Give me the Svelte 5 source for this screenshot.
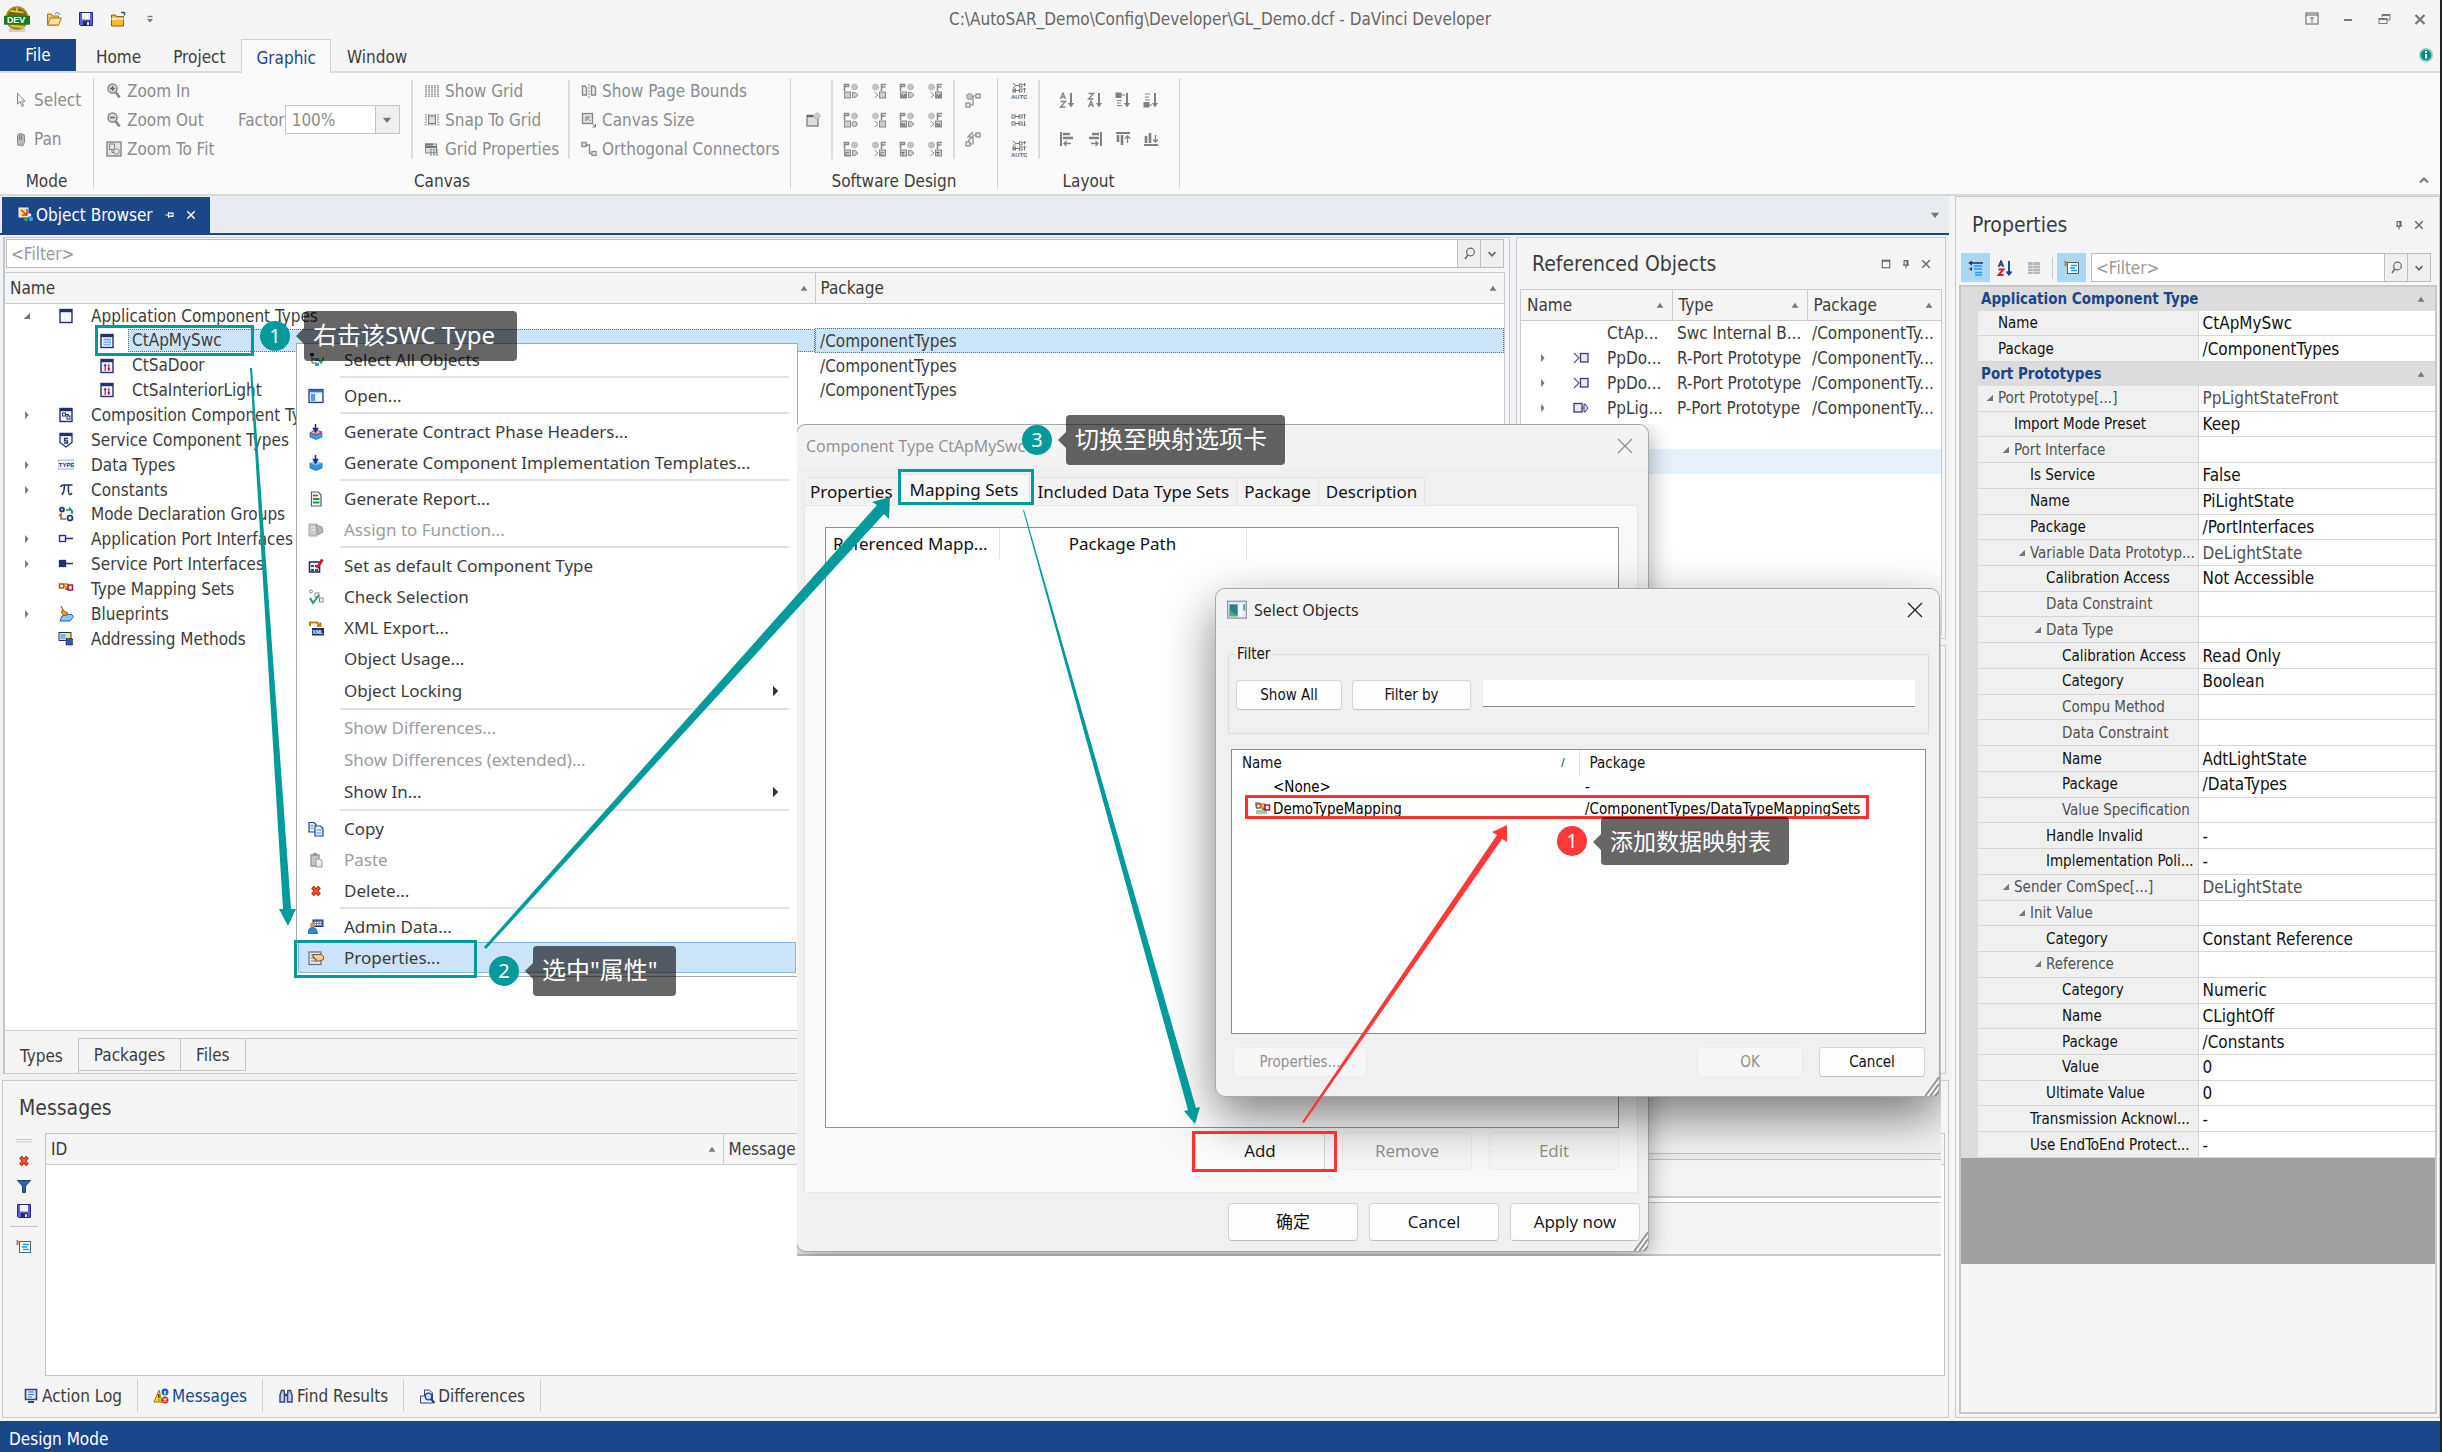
<script>
  const flagPort = (t, round) =>
    `<g stroke="#8a8a8a" fill="#cfcfcf"><path d="M1.500 8V1.500h4v2h-4" fill="none" stroke-width="1.600"/><rect x="1.500" y="9" width="6" height="6"/>${round ? '<circle cx="11.500" cy="12" r="2.600"/>' : '<path d="M9.500 9.500h2.500l3 2.500-3 2.500H9.500z"/>'}<circle cx="11.500" cy="4" r="3" fill="#c4c4c4" stroke="#a8a8a8" stroke-dasharray="1.500 1"/></g><text x="2" y="14.600" font-size="6" font-family="Liberation Sans" font-weight="700" fill="#666">${t}</text>`;
  const flagReq = (t, round) =>
    `<g stroke="#8a8a8a" fill="#cfcfcf"><path d="M10.500 8V1.500h4.500M10.500 4h4" fill="none" stroke-width="1.600"/><rect x="8.500" y="9" width="6" height="6"/><path d="${round ? 'M3.500 9.500q3 0 3 2.500t-3 2.500' : 'M3.500 9l3.500 3-3.500 3'}" fill="none"/><circle cx="4.500" cy="4" r="3" fill="#c4c4c4" stroke="#a8a8a8" stroke-dasharray="1.500 1"/></g><text x="9" y="14.600" font-size="6" font-family="Liberation Sans" font-weight="700" fill="#666">${t}</text>`;
  const auto = `<g stroke="#777" fill="none"><path d="M2 0l3 2.500L2 5M5 2.500h4M2 7.500h7M13.500 0v3.500M13.500 5v4.500M12 2l1.500-1.500 1.500 1.500M12 6.500l1.500-1.500 1.500 1.500"/><rect x="8.500" y="1" width="2.500" height="3"/><rect x="2" y="6" width="2.500" height="3"/><rect x="8.500" y="6" width="2.500" height="3"/></g><text x="0" y="15.500" font-size="6" font-family="Liberation Sans" font-weight="700" fill="#666">AUTO</text>`;
  const pageIn = `<rect x="3.500" y="2.500" width="11" height="11" fill="#fff" stroke="#4d5f77"/><path d="M7 5.500h6M6 8h5M7 10.500h6" stroke="#1f9bff" stroke-width="1.300"/><path d="M1 1l3 2.500L1 6z" fill="#e8a33b" stroke="#6b4a18" stroke-width=".6"/>`;
  const floppy = `<path d="M1.500 1.500h13v13h-12l-1-1z" fill="#5a60dc" stroke="#22268a"/><rect x="4" y="2" width="8" height="6.500" fill="#f2f4ff"/><rect x="5" y="10" width="7" height="4.500" fill="#2a2a55"/><rect x="9" y="11" width="2" height="3" fill="#dde"/>`;
  const win = (inner) => `<rect x="2" y="1.500" width="12" height="13" fill="#f4f8ff" stroke="#25306b" stroke-width="1.400"/><path d="M2 3h12" stroke="#25306b" stroke-width="2.400"/>${inner}`;
  const redX = `<path d="M4.500 4l7 8M11.500 4l-7 8" stroke="#8e1b06" stroke-width="3.600"/><path d="M4.800 4.400l6.400 7.200M11.200 4.400l-6.400 7.200" stroke="#ff5a2a" stroke-width="2"/>`;
  const mapping = `<g fill="#fff" stroke-width="1.500"><path d="M1.500 3h4v4h-4z" stroke="#a05a20"/><path d="M6.500 3h3v3h-3z" stroke="#d08a1a"/><path d="M10 4h4.500v5H10z" stroke="#b4123a"/><path d="M7 8h4" stroke="#b4123a"/></g>`;

  const icons = {
    app: `<path d="M3 13.500h10V16H3z" fill="#cfcfcf"/><ellipse cx="8" cy="7.500" rx="7" ry="7.300" fill="#a78a12"/><ellipse cx="8" cy="6" rx="5.500" ry="4.500" fill="#6f6a12"/><path d="M4 3l8 1M4 12l8 1M8 1v3" stroke="#e6cf53"/><rect x="0" y="6" width="16" height="5.500" fill="#157a25"/><text x="1.800" y="10.700" font-size="5.500" font-family="Liberation Sans" font-weight="700" fill="#fff">DEV</text>`,
    open: `<path d="M1.500 14V3h4l1 2h6v9z" fill="#f0c562" stroke="#a5761a"/><path d="M1.500 14l3-7h11l-3 7z" fill="#ffe39a" stroke="#a5761a"/><path d="M9 3q3-3 5 1" stroke="#4b6ca8" fill="none"/>`,
    save: floppy,
    folderUp: `<path d="M1.500 15V4h4l1 1.500h7V15z" fill="#f7b733" stroke="#8e5f0e"/><path d="M1.500 8h12" stroke="#fff0b8" stroke-width="2"/><path d="M11 1.500h3.500v3" stroke="#37558f" stroke-width="1.500" fill="none"/>`,
    more: `<path d="M5.500 5.500h5" stroke="#777" stroke-width="1.400"/><path d="M5 8h6L8 11.500z" fill="#777"/>`,
    pinTop: `<g stroke="#777" fill="none"><rect x="2" y="2" width="12" height="11" stroke-width="1.200"/><path d="M2 4h12" stroke-width="1.200"/><path d="M8 12V6M6 8l2-2 2 2"/></g>`,
    min: `<path d="M4 9h8" stroke="#777" stroke-width="2"/>`,
    restore: `<g stroke="#777" fill="none"><path d="M6 6V3.500h8V9h-2.500"/><path d="M6 4h8" stroke-width="2"/><rect x="3" y="7.500" width="8" height="5"/><path d="M3 8h8" stroke-width="2"/></g>`,
    closeBig: `<path d="M3.500 4l9 9M12.500 4l-9 9" stroke="#777" stroke-width="2.200"/>`,
    info: `<circle cx="8" cy="8" r="7" fill="#8fcfc8"/><circle cx="8" cy="8" r="5.300" fill="#0e8d86"/><path d="M8 7v4.500M8 4v1.800" stroke="#fff" stroke-width="2"/>`,
    chevUp: `<path d="M4 10.500l4-4 4 4" stroke="#777" stroke-width="2" fill="none"/>`,
    cursor: `<path d="M4.500 1v11l2.600-2.200L9 14.500l1.800-.8-2-4.500H12z" fill="#f4f4f4" stroke="#888"/>`,
    hand: `<path d="M4.500 14V5q0-1.500 1.200-1.500V3q1-2 2 0 1-1.500 2 .5 1.800-.5 1.800 1.500v6l-1.500 3.500z" fill="#bbb" stroke="#888"/><path d="M6.500 4v5M8.500 4v5" stroke="#777"/>`,
    zoomIn: `<circle cx="6.500" cy="5.500" r="4.500" fill="#ddd" stroke="#888" stroke-width="1.500"/><path d="M4 5.500h5M6.500 3v5" stroke="#666" stroke-width="1.500"/><path d="M9.500 9l4 5.500" stroke="#888" stroke-width="2.600"/>`,
    zoomOut: `<circle cx="6.500" cy="5.500" r="4.500" fill="#ddd" stroke="#888" stroke-width="1.500"/><path d="M4 5.500h5" stroke="#666" stroke-width="1.500"/><path d="M9.500 9l4 5.500" stroke="#888" stroke-width="2.600"/>`,
    fit: `<g fill="#e4e4e4" stroke="#888"><rect x="1" y="1" width="14" height="14" stroke-width="1.400"/><rect x="3.500" y="3" width="5" height="5.500"/><circle cx="10.500" cy="10.500" r="2.800"/><path d="M6 8.500v3h2" fill="none"/></g>`,
    grid: `<path d="M2 2v12M5 2v12M8 2v12M11 2v12M14 2v12" stroke="#a4a4a4" stroke-width="2" stroke-dasharray="1.500 .6"/>`,
    snap: `<path d="M2 2v12M14 2v12M5 2v12M11 2v12M8 2v12" stroke="#999" stroke-width="1.500" stroke-dasharray="1.500 1"/><rect x="4.500" y="4" width="7" height="7.500" fill="#ddd" stroke="#777"/>`,
    gridProps: `<rect x="1.500" y="3" width="11" height="9" fill="#ddd" stroke="#888"/><path d="M1 3.500h8M1 6h12" stroke="#777" stroke-width="2"/><path d="M7 8v7M10 8v7M13 8v7" stroke="#777" stroke-width="1.500" stroke-dasharray="1.500 1"/>`,
    bounds: `<g fill="#eee" stroke="#888"><path d="M1.500 3h2.500l1.500 2v7h-4zM10.500 3h2.500l1.500 2v7h-4z" stroke-width="1.400"/><path d="M8 1v14" stroke-dasharray="2 1"/></g>`,
    canvas: `<rect x="1.500" y="1.500" width="10" height="10" fill="#ddd" stroke="#888" stroke-width="1.300"/><path d="M5 9V5h4M6 6l3 3" stroke="#777" fill="none"/><path d="M11 11l3.500 4M14.500 12v3h-3" stroke="#777" fill="none"/>`,
    ortho: `<g fill="#eee" stroke="#888" stroke-width="1.300"><rect x="1" y="1.500" width="4" height="4"/><rect x="11" y="10.500" width="4" height="4"/><path d="M5 4h3.500v8.500H11" fill="none"/></g>`,
    newComp: `<path d="M2 4h11v10H2z" fill="#ddd" stroke="#888" stroke-width="1.400"/><path d="M2 4h6" stroke="#666" stroke-width="2.500"/><circle cx="12" cy="4" r="3" fill="#ccc" stroke="#aaa" stroke-dasharray="1.500 1"/>`,
    p1: flagPort('', false), r1: flagReq('', false), p2: flagPort('M', false), r2: flagReq('M', false),
    p3: flagPort('', true), r3: flagReq('', true), p4: flagPort('N', false), r4: flagReq('N', false),
    p5: flagPort('C', false), r5: flagReq('C', false), p6: flagPort('T', false), r6: flagReq('T', false),
    conn: `<g fill="#eee" stroke="#888" stroke-width="1.200"><circle cx="4.500" cy="4.500" r="3" fill="#c4c4c4" stroke-dasharray="1.500 1"/><rect x="11" y="2" width="4" height="4"/><rect x="1" y="11" width="4" height="4"/><path d="M11 4H8v9H5" fill="none"/></g>`,
    connFast: `<g fill="#eee" stroke="#888" stroke-width="1.200"><rect x="11" y="2" width="4" height="4"/><rect x="1" y="11" width="4" height="4"/><path d="M11 4H8v9H5M8 1L3 6h4L3 10" fill="none"/></g>`,
    auto,
    align2: `<g fill="none" stroke="#777"><path d="M4 4.500h5M4 11.500h5M13.500 2v5M12 3.500l1.500-1.500 1.500 1.500M13.500 9v5M12 12.500l1.500 1.500 1.500-1.500"/><rect x="1" y="3" width="3" height="3"/><rect x="8" y="3" width="3" height="3"/><rect x="1" y="10" width="3" height="3"/><rect x="8" y="10" width="3" height="3"/></g>`,
    sortAZ: `<g fill="none" stroke="#808080" stroke-width="1.300"><path d="M1.500 7L4 1l2.500 6M2.500 5h3M1.500 9.500h5l-5 5.500h5"/><path d="M12 1v12" stroke-width="2"/></g><path d="M9 11h6l-3 4.500z" fill="#808080"/>`,
    sortZA: `<g fill="none" stroke="#808080" stroke-width="1.300"><path d="M1.500 1.500h5l-5 5.500h5M1.500 15L4 9l2.500 6M2.500 13h3"/><path d="M12 1v12" stroke-width="2"/></g><path d="M9 11h6l-3 4.500z" fill="#808080"/>`,
    sortTop: `<g stroke="#808080" fill="#808080"><rect x="1" y="1" width="5" height="4.500"/><path d="M6 3h4M2 8.500h5M2 11h4M2 13.500h5" stroke-width="1.200"/><path d="M12 1v12" stroke-width="2"/></g><path d="M9 11h6l-3 4.500z" fill="#808080"/>`,
    sortBottom: `<g stroke="#808080" fill="#808080"><rect x="1" y="10.500" width="5" height="4.500"/><path d="M6 13h3M2 2h5M2 5h4M2 8h5" stroke-width="1.200"/><path d="M12 1v12" stroke-width="2"/></g><path d="M9 11h6l-3 4.500z" fill="#808080"/>`,
    alLeft: `<g stroke="#808080" fill="none"><path d="M2 1v14" stroke-width="2"/><path d="M4 3h7M4 7h10" stroke-width="2.600"/><path d="M5 12.500h7M7.500 10L5 12.500 7.500 15" stroke-width="1.300"/></g>`,
    alRight: `<g stroke="#808080" fill="none"><path d="M14 1v14" stroke-width="2"/><path d="M5 3h7M2 7h10" stroke-width="2.600"/><path d="M4 12.500h7M8.500 10l2.500 2.500L8.500 15" stroke-width="1.300"/></g>`,
    alTop: `<g stroke="#808080" fill="none"><path d="M1 2h14" stroke-width="2"/><path d="M3 4v7M7 4v10" stroke-width="2.600"/><path d="M12.500 12V5M10 7.500L12.500 5 15 7.500" stroke-width="1.300"/></g>`,
    alBottom: `<g stroke="#808080" fill="none"><path d="M1 14h14" stroke-width="2"/><path d="M3 5v7M7 2v10" stroke-width="2.600"/><path d="M12.500 4v7M10 8.500l2.500 2.500L15 8.500" stroke-width="1.300"/></g>`,
    objBrowser: `<rect x="1" y="1" width="9" height="9" fill="#ffe27a" stroke="#e9edf8"/><path d="M3 3l6 5M9 2v6H4" stroke="#d33a1f" stroke-width="1.500" fill="none"/><circle cx="13" cy="12" r="2.200" fill="#2aa7e8"/><circle cx="8" cy="12.500" r="2" fill="#27a343"/><circle cx="11.500" cy="8" r="1.800" fill="#f5f5f5"/>`,
    pinSide: `<path d="M2 8h4M6 4v8M6 5.500h6v4.500H6M6 9.500h6" stroke="currentColor" stroke-width="1.500" fill="none"/>`,
    pin: `<path d="M4 9.500h8M5.500 9.500v-6h5v6M9.300 3.500v6M8 9.500V14" stroke="currentColor" stroke-width="1.500" fill="none"/>`,
    x: `<path d="M3 3l10 10M13 3L3 13" stroke="currentColor" stroke-width="1.900"/>`,
    square: `<rect x="3" y="3" width="10" height="10" fill="none" stroke="#666" stroke-width="1.500"/><path d="M3 4h10" stroke="#666" stroke-width="2"/>`,
    search: `<circle cx="9.500" cy="6" r="3.800" fill="none" stroke="#666" stroke-width="1.200"/><path d="M6.800 9L4 13" stroke="#666" stroke-width="1.500"/>`,
    chevDown: `<path d="M3.500 5.500l4.500 5 4.500-5" stroke="#666" stroke-width="2.200" fill="none"/>`,
    triDown: `<path d="M2.500 5h11L8 12z" fill="#777"/>`,
    triUp: `<path d="M3.500 11.500h9L8 5z" fill="#777"/>`,
    sub: `<path d="M4 1l7 7-7 7z" fill="#333"/>`,
    closed: `<path d="M5.500 2.500L10 8l-4.500 5.500z" fill="#777"/>`,
    opened: `<path d="M12 3.500V12H3.500z" fill="#777"/>`,
    ctApp: win(''),
    ctMy: win('<rect x="4.500" y="5.500" width="7.500" height="7" fill="#7db4f0"/><path d="M5 8h6M5 10.500h6" stroke="#fff" stroke-width=".7"/>'),
    ctSa: win('<path d="M6.200 7v6M9.800 6v6.500" stroke="#c2183c" stroke-width="1.300"/><path d="M4.500 8h3.400L6.200 5.500zM8 10.500h3.500l-1.700 2.500z" fill="#7b1fa2"/>'),
    ctComp: win('<rect x="4.500" y="6" width="3" height="3" fill="#fff" stroke="#25306b"/><rect x="9" y="9" width="3" height="3" fill="#fff" stroke="#25306b"/><path d="M7.500 7.500h3V9" stroke="#25306b" fill="none"/>'),
    ctSvc: `<path d="M2 1.500h12v9L8 15l-6-4.500z" fill="#f4f8ff" stroke="#25306b" stroke-width="1.300"/><path d="M2 3h12" stroke="#25306b" stroke-width="2.200"/><path d="M10 6.500H6.500v2.300h3V11H6" fill="none" stroke="#25306b" stroke-width="1.300"/>`,
    types: `<rect x="0" y="3" width="16" height="9" fill="#eef3ff" stroke="#8fa3d8" stroke-width=".8"/><text x=".8" y="10.300" font-size="6" font-family="Liberation Sans" font-weight="700" fill="#25306b">TYPE</text>`,
    pi: `<path d="M2.500 5q1-2 3-2h9M6.500 3.500q0 6-2.500 9.500M10.500 3.500q-.5 9 1 9t2.500-1.500" fill="none" stroke="#25306b" stroke-width="1.500"/>`,
    mode: `<g fill="none" stroke-width="1.700"><circle cx="4" cy="3.500" r="2" fill="#9fd0e8" stroke="#25306b"/><path d="M8 4h5l-2-2.500M14 4v4" stroke="#1c8a5c"/><circle cx="12" cy="12" r="2.500" fill="#dfe7ff" stroke="#25306b"/><path d="M8 13H3V8l-2 2" stroke="#b56a16"/></g>`,
    portApp: `<rect x="1.500" y="4.500" width="6" height="6" fill="#eef" stroke="#25306b" stroke-width="1.300"/><path d="M8 7.500h7" stroke="#25306b" stroke-width="1.500"/>`,
    portSvc: `<rect x="1.500" y="4.500" width="6" height="6" fill="#25306b" stroke="#25306b" stroke-width="1.300"/><path d="M8 7.500h7" stroke="#25306b" stroke-width="1.500"/>`,
    mapping,
    mapping2: `<rect x="1" y="9" width="11" height="4" fill="#8fd0b0"/><rect x="0" y="1" width="5" height="5" fill="#7db4f0"/>` + mapping,
    blue: `<path d="M4 10l9-2 2.500 2.500L12 15H2z" fill="#8ec5f5" stroke="#1f5fa8"/><path d="M3 0l2 4-2 2 3 4 4-3-4-2z" fill="#e89b1e" stroke="#8a5508" stroke-width=".8"/>`,
    addr: `<rect x="1" y="1.500" width="12" height="8" fill="#ffe27a" stroke="#25306b"/><rect x="2.500" y="3" width="5" height="5" fill="#7db4f0"/><rect x="8" y="7.500" width="6.500" height="6.500" fill="#3b55a8" stroke="#25306b" stroke-dasharray="1.500 .8"/>`,
    reqPort: `<path d="M1 3l5 5-5 5" fill="none" stroke="#5a5a80" stroke-width="1.200"/><rect x="7.500" y="3.500" width="7.500" height="8.500" fill="#e8e8f4" stroke="#3c3c66" stroke-width="1.300"/>`,
    provPort: `<rect x="1" y="3.500" width="8" height="8.500" fill="#e8e8f4" stroke="#3c3c66" stroke-width="1.300"/><path d="M9 8h2M11 4h1l3 4-3 4h-1z" fill="#dcdcf0" stroke="#3c3c66"/>`,
    selAll: `<path d="M2 1h4v3H2z" fill="#333"/><path d="M4 4v7h5M4 7h5" stroke="#555" fill="none"/><rect x="7" y="6" width="4" height="3" fill="#2a9df4"/><rect x="7" y="11" width="4" height="3" fill="#2a9df4"/><path d="M11 8l2 3 3-6" stroke="#2a9d3c" stroke-width="1.600" fill="none"/>`,
    openWin: `<rect x="1" y="1.500" width="14" height="13" fill="#d6e8ff" stroke="#25408b" stroke-width="1.300"/><path d="M1 3h14" stroke="#2f6fd0" stroke-width="2.500"/><rect x="3" y="6" width="4" height="7" fill="#4d9cf5"/><rect x="8.500" y="6" width="5" height="7" fill="#fff"/>`,
    genH: `<path d="M2 9l6 2 6-2v4l-6 2.500L2 13z" fill="#3aa0f0" stroke="#135a9c" stroke-width=".7"/><path d="M2 9l5-3 7 2-6 2.500z" fill="#f3c0c0" stroke="#c22" stroke-width=".9"/><path d="M7.500 0v6M5.500 4.500L7.500 8l2-3.500z" stroke="#1b2f78" stroke-width="1.500" fill="#1b2f78"/>`,
    genC: `<path d="M2 8l6 2 6-2v5l-6 2.500L2 13z" fill="#2f95ea" stroke="#135a9c" stroke-width=".7"/><path d="M2 8l5-2.500L14 8l-6 2.500z" fill="#7cc6f8"/><path d="M7.500 0v6M5.500 4.500L7.500 8l2-3.500z" stroke="#1b2f78" stroke-width="1.500" fill="#1b2f78"/>`,
    report: `<path d="M3.500 1h7l2.500 3v11h-9.500z" fill="#fff" stroke="#4d5f77" stroke-width="1.200"/><path d="M5 4.500h5" stroke="#c33" stroke-width="1.800"/><path d="M5 8h6.500M5 11.500h6.500" stroke="#1f9a3c" stroke-width="2.200"/>`,
    assign: `<path d="M1 2h8v12H1z" fill="#c9c9c9" stroke="#a5a5a5"/><path d="M8 3l6 2 1 5-5 3z" fill="#b5b5b5" stroke="#999"/><path d="M3 5h4M3 8h4" stroke="#eee"/>`,
    setDef: `<rect x="1.500" y="4" width="10" height="10" fill="#fff" stroke="#25306b" stroke-width="1.600"/><path d="M3 7h3v2H3zM7 7h3v2H7zM3 11h3v2H3zM7 11h3v2H7z" fill="#4d3a7a"/><path d="M9 10L14.500 1.500" stroke="#d21f2f" stroke-width="3"/>`,
    check: `<g fill="#fff" stroke="#888"><circle cx="3" cy="2.500" r="1.500"/><rect x="7" y="4" width="4" height="4"/><rect x="11.500" y="9" width="3.500" height="4"/></g><path d="M2 9l3 5 6-8" stroke="#1f9a6c" stroke-width="2" fill="none"/>`,
    xml: `<path d="M2 6V2.500h7l3 3.500M9 6h3.500V2.500" stroke="#c77a12" stroke-width="2" fill="none"/><rect x="4" y="8" width="12" height="7.500" fill="#25306b"/><text x="4.600" y="14" font-size="5" font-family="Liberation Sans" font-weight="700" fill="#fff">XML</text>`,
    copy: `<g fill="#eaf2ff" stroke="#25408b" stroke-width="1.200"><path d="M1 1.500h5l2 2V11H1z"/><path d="M7 5h5.500L15 7.500V15H7z"/></g><path d="M2.500 4.500h3M2.500 7h3M8.500 9h5M8.500 12h5" stroke="#2f8ff0"/>`,
    paste: `<path d="M3 3h8v11H3z" fill="#c4c4c4" stroke="#999" stroke-width="1.400"/><rect x="5" y="1" width="4" height="3" fill="#999"/><path d="M8 7h4l2 2v6H8z" fill="#eee" stroke="#999"/>`,
    redX,
    admin: `<rect x="5" y="1" width="10" height="6.500" fill="#6a7fc0" stroke="#25306b"/><path d="M6.500 3.500h7M6.500 5.500h7" stroke="#fff" stroke-dasharray="1.500 1"/><circle cx="4.500" cy="6" r="2.500" fill="#d49a4a"/><path d="M0 14.500q0-6 4.500-6t5 6z" fill="#2a8be0" stroke="#135a9c" stroke-width=".8"/>`,
    props: `<rect x="1" y="2" width="12" height="12.500" fill="#e8ecf2" stroke="#66707f" stroke-width="1.200"/><path d="M3 5h3M3 8h3M3 11h6" stroke="#66707f"/><path d="M5 4.500h8.500l2 2v3L12 11H8V9H6V7H5z" fill="#f0c98c" stroke="#6d4a1b" stroke-width=".9"/>`,
    filter: `<path d="M1.500 2.500h13l-5 5.500v6.500h-3V8z" fill="#2f62a8" stroke="#1b3d78"/>`,
    pageIn,
    catSort: `<g stroke="#1f9bff"><path d="M6 6h8M6 9h8M7 12.500h7M7 15h7" stroke-width="1.600"/></g><path d="M3 3h12" stroke="#1b3d78" stroke-width="1.600"/><path d="M0 3l4-2.500v5zM1 9l3-2v4z" fill="#1b3d78"/>`,
    azColor: `<path d="M1.500 7L4 1l2.500 6M2.500 5h3" fill="none" stroke="#1b3d78" stroke-width="1.600"/><path d="M1.500 9.500h5l-5 5.500h5" fill="none" stroke="#d21f3f" stroke-width="1.900"/><path d="M12 1v12M9.500 11.500l2.500 3 2.500-3" stroke="#1b3d9c" stroke-width="1.900" fill="none"/>`,
    list: `<rect x="2" y="2" width="12" height="12" fill="#b8b8b8"/><path d="M7 2v12M2 5.500h12M2 8.500h12M2 11.500h12" stroke="#dcdcdc"/>`,
    selObj: `<rect x=".5" y="1" width="15" height="13.500" fill="#e6ecf4" stroke="#8a97a8"/><rect x="2" y="3.500" width="6.500" height="9.500" fill="#2d7d8a"/><path d="M2 13V8l6.500 5z" fill="#4fb06a"/><rect x="10" y="3.500" width="2" height="9.500" fill="#fff"/><rect x="13" y="3.500" width="1.500" height="5" fill="#4fa3a0"/>`,
    actionLog: `<path d="M2.500 1.500h11v10h-11z" fill="#d6ecff" stroke="#3a3f6b" stroke-width="1.600"/><path d="M5 4h6M5 6.500h6M5 9h4" stroke="#3a6fc0"/><path d="M5 14h6" stroke="#3a3f6b" stroke-width="2"/>`,
    msgs: `<path d="M1 14L6 2l3 12z" fill="#ffd92a" stroke="#9a7d00"/><path d="M5.800 6v4M5.800 11.500v1" stroke="#333" stroke-width="1.400"/><circle cx="12" cy="4" r="3.500" fill="#1f5fc8"/><path d="M12 3v3.500" stroke="#fff" stroke-width="1.400"/><circle cx="12" cy="12" r="3.500" fill="#d62f1f"/><path d="M10.500 10.500l3 3M13.500 10.500l-3 3" stroke="#fff" stroke-width="1.200"/>`,
    find: `<g fill="#c8d4ec" stroke="#3a4578" stroke-width="1.500"><path d="M2 14V7l1.500-4.500h2.500l.5 4.500v7zM9.500 14V7l.5-4.500h2.500L14 7v7z"/><path d="M6.500 7h3" stroke-width="2.500"/></g>`,
    diff: `<path d="M1.500 15V8h4V2h5l3 3v10z" fill="#e8f0ff" stroke="#3a4578"/><circle cx="9.500" cy="8.500" r="3.300" fill="#bfe0ff" stroke="#25408b" stroke-width="1.300"/><path d="M12 11l3.500 4" stroke="#25408b" stroke-width="2"/>`,
    closeThin: `<path d="M1 1l14 14M15 1L1 15" stroke="currentColor" stroke-width="1.300"/>`,
    grip: `<path d="M5 16L16 1M9 16l7-9.500M13 16l3-4" stroke="#8f8f8f" stroke-width="1.400"/>`,
    gripper: `<path d="M0 6.500h16M0 9h16" stroke="#c6c6c6" stroke-width="1.200"/>`
  };

  const swIcons = ['p1', 'r1', 'p2', 'r2', 'p3', 'r3', 'p4', 'r4', 'p5', 'r5', 'p6', 'r6'];
  const layIcons = ['sortAZ', 'sortZA', 'sortTop', 'sortBottom', 'alLeft', 'alRight', 'alTop', 'alBottom'];

  const tree = [
    { t: 'Application Component Types', i: 'ctApp', e: 'opened' },
    { t: 'CtApMySwc', i: 'ctMy', l: 1, sel: true, p: '/ComponentTypes' },
    { t: 'CtSaDoor', i: 'ctSa', l: 1, p: '/ComponentTypes' },
    { t: 'CtSaInteriorLight', i: 'ctSa', l: 1, p: '/ComponentTypes' },
    { t: 'Composition Component Types', i: 'ctComp', e: 'closed' },
    { t: 'Service Component Types', i: 'ctSvc' },
    { t: 'Data Types', i: 'types', e: 'closed' },
    { t: 'Constants', i: 'pi', e: 'closed' },
    { t: 'Mode Declaration Groups', i: 'mode' },
    { t: 'Application Port Interfaces', i: 'portApp', e: 'closed' },
    { t: 'Service Port Interfaces', i: 'portSvc', e: 'closed' },
    { t: 'Type Mapping Sets', i: 'mapping' },
    { t: 'Blueprints', i: 'blue', e: 'closed' },
    { t: 'Addressing Methods', i: 'addr' }
  ];

  const refs = [
    ['', '', 'CtAp...', 'Swc Internal B...', '/ComponentTy...'],
    ['closed', 'reqPort', 'PpDo...', 'R-Port Prototype', '/ComponentTy...'],
    ['closed', 'reqPort', 'PpDo...', 'R-Port Prototype', '/ComponentTy...'],
    ['closed', 'provPort', 'PpLig...', 'P-Port Prototype', '/ComponentTy...']
  ];

  const menu = [
    { t: 'Select All Objects', i: 'selAll' }, null,
    { t: 'Open...', i: 'openWin' }, null,
    { t: 'Generate Contract Phase Headers...', i: 'genH' },
    { t: 'Generate Component Implementation Templates...', i: 'genC' }, null,
    { t: 'Generate Report...', i: 'report' },
    { t: 'Assign to Function...', i: 'assign', d: true }, null,
    { t: 'Set as default Component Type', i: 'setDef' },
    { t: 'Check Selection', i: 'check' },
    { t: 'XML Export...', i: 'xml' },
    { t: 'Object Usage...' },
    { t: 'Object Locking', sub: true }, null,
    { t: 'Show Differences...', d: true },
    { t: 'Show Differences (extended)...', d: true },
    { t: 'Show In...', sub: true }, null,
    { t: 'Copy', i: 'copy' },
    { t: 'Paste', i: 'paste', d: true },
    { t: 'Delete...', i: 'redX' }, null,
    { t: 'Admin Data...', i: 'admin' },
    { t: 'Properties...', i: 'props', sel: true }
  ];

  // [label, value, level, expandable, greyed label, greyed value]
  const general = [['Name', 'CtApMySwc', 0], ['Package', '/ComponentTypes', 0]];
  const ports = [
    ['Port Prototype[...]', 'PpLightStateFront', 0, 1, 1, 1],
    ['Import Mode Preset', 'Keep', 1],
    ['Port Interface', '', 1, 1, 1],
    ['Is Service', 'False', 2],
    ['Name', 'PiLightState', 2],
    ['Package', '/PortInterfaces', 2],
    ['Variable Data Prototyp...', 'DeLightState', 2, 1, 1, 1],
    ['Calibration Access', 'Not Accessible', 3],
    ['Data Constraint', '', 3, 0, 1],
    ['Data Type', '', 3, 1, 1],
    ['Calibration Access', 'Read Only', 4],
    ['Category', 'Boolean', 4],
    ['Compu Method', '', 4, 0, 1],
    ['Data Constraint', '', 4, 0, 1],
    ['Name', 'AdtLightState', 4],
    ['Package', '/DataTypes', 4],
    ['Value Specification', '', 4, 0, 1],
    ['Handle Invalid', '-', 3],
    ['Implementation Poli...', '-', 3],
    ['Sender ComSpec[...]', 'DeLightState', 1, 1, 1, 1],
    ['Init Value', '', 2, 1, 1],
    ['Category', 'Constant Reference', 3],
    ['Reference', '', 3, 1, 1],
    ['Category', 'Numeric', 4],
    ['Name', 'CLightOff', 4],
    ['Package', '/Constants', 4],
    ['Value', '0', 4],
    ['Ultimate Value', '0', 3],
    ['Transmission Acknowl...', '-', 2],
    ['Use EndToEnd Protect...', '-', 2]
  ];
</script>

{#snippet ic(name, cls = 'i16')}
  <svg class={cls} viewBox="0 0 16 16" aria-hidden="true">{@html icons[name]}</svg>
{/snippet}

{#snippet tool(name, text)}
  <button class="tool">{@render ic(name)}<span>{text}</span></button>
{/snippet}

{#snippet propRows(rows)}
  <tbody>
    {#each rows as [label, value, level, exp, grey, greyVal]}
      <tr>
        <td class="strip"></td>
        <th scope="row" class:grey style:padding-left="{6 + level * 16}px">
          <span class="cell">{#if exp}{@render ic('opened', 'i12')}{:else}<i class="gap12"></i>{/if}<span>{label}</span></span>
        </th>
        <td class="val" class:grey={greyVal}>{value}</td>
      </tr>
    {/each}
  </tbody>
{/snippet}

<div class="app">
  <header class="titlebar">
    <div class="quick">
      {@render ic('app', 'i24')}
      <button aria-label="Open">{@render ic('open')}</button>
      <button aria-label="Save">{@render ic('save')}</button>
      <button aria-label="Folder">{@render ic('folderUp')}</button>
      <button aria-label="More">{@render ic('more')}</button>
    </div>
    <div class="title">C:\AutoSAR_Demo\Config\Developer\GL_Demo.dcf - DaVinci Developer</div>
    <div class="winctl">
      <button aria-label="Ribbon options">{@render ic('pinTop')}</button>
      <button aria-label="Minimize">{@render ic('min')}</button>
      <button aria-label="Restore">{@render ic('restore')}</button>
      <button aria-label="Close">{@render ic('closeBig')}</button>
    </div>
  </header>

  <nav class="tabs">
    <button class="file">File</button>
    <button>Home</button>
    <button>Project</button>
    <button class="active">Graphic</button>
    <button>Window</button>
    <button class="infobtn" aria-label="Info">{@render ic('info')}</button>
  </nav>

  <section class="ribbon">
    <div class="group mode">
      <div class="body"><div class="col two">{@render tool('cursor', 'Select')}{@render tool('hand', 'Pan')}</div></div>
      <div class="caption">Mode</div>
    </div>
    <div class="group canvas">
      <div class="body">
        <div class="col zoom">{@render tool('zoomIn', 'Zoom In')}{@render tool('zoomOut', 'Zoom Out')}{@render tool('fit', 'Zoom To Fit')}</div>
        <label class="factor">Factor
          <span class="combo"><select><option>100%</option></select>{@render ic('triDown', 'i12')}</span>
        </label>
        <i class="bar"></i>
        <div class="col gridcol">{@render tool('grid', 'Show Grid')}{@render tool('snap', 'Snap To Grid')}{@render tool('gridProps', 'Grid Properties')}</div>
        <i class="bar"></i>
        <div class="col">{@render tool('bounds', 'Show Page Bounds')}{@render tool('canvas', 'Canvas Size')}{@render tool('ortho', 'Orthogonal Connectors')}</div>
      </div>
      <div class="caption">Canvas</div>
    </div>
    <div class="group design">
      <div class="body">
        <button class="ib" aria-label="New component">{@render ic('newComp')}</button>
        <i class="bar"></i>
        <div class="icongrid three">{#each swIcons as n}<button class="ib" aria-label={n}>{@render ic(n)}</button>{/each}</div>
        <i class="bar"></i>
        <div class="col two"><button class="ib" aria-label="Connector">{@render ic('conn')}</button><button class="ib" aria-label="Quick connector">{@render ic('connFast')}</button></div>
      </div>
      <div class="caption">Software Design</div>
    </div>
    <div class="group layout">
      <div class="body">
        <div class="col"><button class="ib tall" aria-label="Auto">{@render ic('auto')}</button><button class="ib tall" aria-label="Align">{@render ic('align2')}</button><button class="ib tall" aria-label="Auto all">{@render ic('auto')}</button></div>
        <i class="bar"></i>
        <div class="icongrid twin">{#each layIcons as n}<button class="ib" aria-label={n}>{@render ic(n)}</button>{/each}</div>
      </div>
      <div class="caption">Layout</div>
    </div>
    <button class="collapse" aria-label="Collapse ribbon">{@render ic('chevUp')}</button>
  </section>

  <main class="main">
    <div class="left">
      <div class="doctabs">
        <div class="doctab">{@render ic('objBrowser')}<span>Object Browser</span>
          <button aria-label="Pin">{@render ic('pinSide', 'i12')}</button><button aria-label="Close tab">{@render ic('x', 'i12')}</button></div>
        <button class="docmenu" aria-label="Tabs menu">{@render ic('triDown', 'i12')}</button>
      </div>
      <div class="docs">
        <section class="browser panel">
          <div class="filter"><input placeholder="&lt;Filter>" aria-label="Filter objects" /><button aria-label="Search">{@render ic('search')}</button><button aria-label="Filter options">{@render ic('chevDown', 'i12')}</button></div>
          <div class="gridbox">
            <table class="tree">
              <thead><tr><th class="c1"><span class="head">Name{@render ic('triUp', 'i12')}</span></th><th><span class="head">Package{@render ic('triUp', 'i12')}</span></th></tr></thead>
              <tbody>
                {#each tree as r}
                  <tr class:sel={r.sel}>
                    <td><span class="node" class:child={r.l}><span class="exp">{#if r.e}{@render ic(r.e, 'i12')}{/if}</span>{@render ic(r.i)}<span class="lbl">{r.t}</span></span></td>
                    <td class="pkg">{r.p ?? ''}</td>
                  </tr>
                {/each}
              </tbody>
            </table>
          </div>
          <div class="bottomtabs"><button class="on">Types</button><button>Packages</button><button>Files</button></div>
        </section>
        <div class="side">
          <section class="refobj panel">
            <div class="ptitle"><h2>Referenced Objects</h2><span class="acts">{@render ic('square', 'i12')}{@render ic('pin', 'i12')}{@render ic('x', 'i12')}</span></div>
            <div class="refgrid">
              <table>
                <colgroup><col class="r1" /><col class="r2" /><col /></colgroup>
                <thead><tr><th><span class="head">Name{@render ic('triUp', 'i12')}</span></th><th><span class="head">Type{@render ic('triUp', 'i12')}</span></th><th><span class="head">Package{@render ic('triUp', 'i12')}</span></th></tr></thead>
                <tbody>
                  {#each refs as [e, i, n, t, p]}
                    <tr><td><span class="refnode"><span class="exp">{#if e}{@render ic(e, 'i12')}{/if}</span><span class="ri">{#if i}{@render ic(i)}{/if}</span>{n}</span></td><td>{t}</td><td>{p}</td></tr>
                  {/each}
                </tbody>
              </table>
            </div>
          </section>
          <section class="lower panel"></section>
        </div>
      </div>
      <section class="messages panel">
        <h2>Messages</h2>
        <div class="msgbody">
          <div class="msgtools">
            {@render ic('gripper')}
            <button aria-label="Clear">{@render ic('redX')}</button>
            <button aria-label="Filter messages">{@render ic('filter')}</button>
            <button aria-label="Save messages">{@render ic('save')}</button>
            <hr />
            <button aria-label="Details">{@render ic('pageIn')}</button>
          </div>
          <div class="msggrid">
            <table><thead><tr><th class="mid"><span class="head">ID{@render ic('triUp', 'i12')}</span></th><th>Message</th></tr></thead></table>
          </div>
        </div>
        <div class="msgtabs">
          <button>{@render ic('actionLog')}Action Log</button>
          <button class="on">{@render ic('msgs')}Messages</button>
          <button>{@render ic('find')}Find Results</button>
          <button>{@render ic('diff')}Differences</button>
        </div>
      </section>
    </div>

    <aside class="props panel">
      <div class="ptitle"><h2>Properties</h2><span class="acts">{@render ic('pin', 'i12')}{@render ic('x', 'i12')}</span></div>
      <div class="ptools">
        <button class="lit" aria-label="Categorized">{@render ic('catSort')}</button>
        <button aria-label="Alphabetical">{@render ic('azColor')}</button>
        <button aria-label="List">{@render ic('list')}</button>
        <i></i>
        <button class="lit" aria-label="Details">{@render ic('pageIn')}</button>
        <div class="filter"><input placeholder="&lt;Filter>" aria-label="Filter properties" /><button aria-label="Search properties">{@render ic('search')}</button><button aria-label="Property filter options">{@render ic('chevDown', 'i12')}</button></div>
      </div>
      <div class="pgrid">
        <div class="cat">Application Component Type{@render ic('triUp', 'i12')}</div>
        <table class="ptable general">{@render propRows(general)}</table>
        <div class="cat">Port Prototypes{@render ic('triUp', 'i12')}</div>
        <table class="ptable ports">{@render propRows(ports)}</table>
        <div class="void"></div>
      </div>
    </aside>
  </main>

  <footer class="status">Design Mode</footer>

  <div class="menu" role="menu">
    {#each menu as m}
      {#if m}
        <button role="menuitem" class:plain={!m.i} class:sel={m.sel} disabled={m.d}>
          <span class="mi">{#if m.i}{@render ic(m.i)}{/if}</span><span class="mt">{m.t}</span>{#if m.sub}{@render ic('sub', 'i12')}{/if}
        </button>
      {:else}<hr />{/if}
    {/each}
  </div>

  <div class="inlay">
    <div class="under">
      <div class="u1"></div><div class="u2"></div><div class="u3"></div><div class="u4"></div><div class="u5"></div><div class="u6"></div><div class="u7"></div>
    </div>
    <section class="dialog dlg1">
      <div class="dtitle"><span>Component Type CtApMySwc</span><button aria-label="Close dialog">{@render ic('closeThin')}</button></div>
      <div class="dtabs"><button>Properties</button><button class="on">Mapping Sets</button><button>Included Data Type Sets</button><button>Package</button><button>Description</button></div>
      <div class="page">
        <div class="listbox">
          <table><thead><tr><th class="m1">Referenced Mapp...</th><th class="m2">Package Path</th><th></th></tr></thead></table>
        </div>
        <div class="btns"><button>Add</button><button disabled>Remove</button><button disabled>Edit</button></div>
      </div>
      <div class="btns foot"><button>确定</button><button>Cancel</button><button>Apply now</button></div>
      <span class="grip">{@render ic('grip', 'i20')}</span>
    </section>
    <section class="dialog dlg2">
      <div class="dtitle"><span class="withicon">{@render ic('selObj', 'i20')}Select Objects</span><button aria-label="Close selection">{@render ic('closeThin')}</button></div>
      <fieldset><legend>Filter</legend>
        <button>Show All</button><button class="wide">Filter by</button><input aria-label="Filter text" />
      </fieldset>
      <div class="objbox">
        <table>
          <thead><tr><th class="o1"><span class="head">Name<em>∕</em></span></th><th>Package</th></tr></thead>
          <tbody>
            <tr><td class="none">&lt;None&gt;</td><td>-</td></tr>
            <tr><td class="obj"><span class="node">{@render ic('mapping2')}DemoTypeMapping</span></td><td>/ComponentTypes/DataTypeMappingSets</td></tr>
          </tbody>
        </table>
      </div>
      <div class="dfoot"><button class="first" disabled>Properties...</button><button disabled>OK</button><button>Cancel</button></div>
      <span class="grip">{@render ic('grip', 'i20')}</span>
    </section>
  </div>

  <svg class="arrows" aria-hidden="true">
    <g fill="#029a9a">
      <path d="M250 368L252 368 291 909 296 909 288 926 279 909 283 909z" />
      <path d="M484 947L877 505 872 502 890 497 889 519 884 514 486 949z" />
      <path d="M1023 510L1024 510 1196 1108 1200 1107 1195 1124 1184 1111 1188 1110z" />
    </g>
    <path fill="#ff3838" d="M1302 1122L1497 835 1492 832 1507 825 1507 842 1502 839 1304 1123z" />
  </svg>

  <div class="frame f1"></div>
  <div class="frame f2"></div>
  <div class="frame f3"></div>
  <div class="frame red f4"></div>
  <div class="frame red f5"></div>

  <div class="note n1"><b>1</b><p>右击该SWC Type</p></div>
  <div class="note n2"><b>2</b><p>选中"属性"</p></div>
  <div class="note n3"><b>3</b><p>切换至映射选项卡</p></div>
  <div class="note n4"><b class="red">1</b><p>添加数据映射表</p></div>
</div>

<style>
  :global(body) { background: #f5f5f5; }
  .app, .app :global(*) { box-sizing: border-box; }
  .app {
    --ui: "DejaVu Sans Condensed", "Noto Sans", "Noto Sans CJK SC", sans-serif;
    --seg: "Open Sans", "Noto Sans CJK SC", sans-serif;
    position: relative; display: flex; flex-direction: column; min-height: 100vh;
    border-right: 2px solid #222; background: #f5f5f5; color: #3c3c3c;
    font: 17px/24px var(--ui); overflow: hidden; white-space: nowrap;
  }
  button, input, select { font: inherit; color: inherit; background: none; border: 0; padding: 0; margin: 0; border-radius: 0; }
  button { display: inline-flex; align-items: center; justify-content: center; }
  svg { flex: none; display: block; }
  .i12 { width: 12px; height: 12px; }
  .i16 { width: 16px; height: 16px; }
  .i20 { width: 20px; height: 20px; }
  .i24 { width: 26px; height: 26px; }
  h2 { margin: 0; font-size: 21px; font-weight: 400; line-height: 28px; }
  table { border-collapse: collapse; border-spacing: 0; width: 100%; table-layout: fixed; }
  th { font-weight: 400; text-align: left; padding: 0; }
  td { padding: 0; }
  .head { display: flex; justify-content: space-between; align-items: center; }

  .titlebar { display: grid; grid-template-columns: 1fr auto 1fr; align-items: center; height: 39px; padding: 0 4px 2px 4px; color: #666; }
  .quick, .winctl { display: flex; align-items: center; }
  .quick { gap: 16px; }
  .winctl { justify-content: flex-end; gap: 20px; padding-right: 8px; }
  .tabs { display: flex; height: 34px; border-bottom: 2px solid #dcdcdc; }
  .tabs button { padding: 3px 16px 0; }
  .tabs .file { width: 76px; margin-right: 4px; background: #1a478a; color: #fff; padding-top: 0; }
  .tabs .active { height: 34px; padding: 2px 14px 0; border: 1px solid #d0d0d0; border-bottom: 0; background: #fafafa; color: #1a478a; }
  .tabs .infobtn { margin-left: auto; padding: 0 6px; }

  .ribbon { display: flex; height: 123px; padding: 5px 0 6px; background: #fafafa; border-bottom: 2px solid #d9d9d9; color: #8c8c8c; }
  .group { height: 111px; border-right: 1px solid #d4d4d4; }
  .body { display: flex; align-items: center; height: 83px; }
  .caption { margin-top: 12px; line-height: 16px; text-align: center; color: #3c3c3c; }
  .col { display: flex; flex-direction: column; align-items: flex-start; gap: 6px; }
  .col.two { gap: 16px; }
  .tool { gap: 5px; height: 23px; }
  .ib { width: 16px; height: 16px; }
  .ib.tall { height: 23px; }
  .bar { width: 2px; height: 79px; background: #dcdcdc; margin: 0 11px; }
  .mode { width: 94px; padding-left: 13px; }
  .mode .caption { margin-left: -13px; }
  .canvas { width: 697px; padding-left: 12px; }
  .canvas .caption { margin-left: -12px; }
  .zoom { width: 132px; }
  .gridcol { width: 133px; }
  .factor { display: flex; align-items: center; justify-content: space-between; width: 162px; }
  .combo { position: relative; width: 116px; height: 29px; border: 1px solid #c4c4c4; background: #fff; }
  .combo select { appearance: none; width: 100%; height: 100%; padding-left: 6px; }
  .combo::after { content: ""; position: absolute; right: 0; top: 0; width: 23px; height: 100%; background: #eee; border-left: 1px solid #c4c4c4; }
  .combo svg { position: absolute; right: 6px; top: 8px; z-index: 1; }
  .design { width: 207px; padding-left: 14px; }
  .design .caption { margin-left: -14px; }
  .design .bar { margin: 0 10px; }
  .icongrid { display: grid; grid-template-columns: repeat(4, 16px); column-gap: 12px; }
  .three { row-gap: 13px; }
  .twin { row-gap: 23px; margin-left: 8px; }
  .design .two { gap: 23px; }
  .layout { width: 182px; padding-left: 13px; }
  .layout .caption { margin-left: -13px; }
  .collapse { margin-left: auto; align-self: flex-end; width: 32px; height: 16px; }

  .main { flex: 1; display: flex; gap: 6px; padding-bottom: 3px; }
  .left { flex: 1; display: flex; flex-direction: column; min-width: 0; }
  .panel { border: 1px solid #cbcbcb; background: #f5f5f5; }
  .doctabs { display: flex; justify-content: space-between; height: 39px; padding: 1px 0 0 2px; background: #e8ecf1; border-bottom: 2px solid #1a478a; }
  .doctab { display: flex; align-items: center; gap: 2px; width: 208px; padding-left: 16px; background: #1a478a; color: #fff; }
  .doctab button { width: 16px; margin-left: 3px; }
  .doctab span { margin-right: 4px; }
  .docmenu { width: 28px; }
  .docs { flex: 1; display: flex; gap: 6px; padding: 2px 3px 6px; background: #f0f2f5; }
  .browser { flex: 1; display: flex; flex-direction: column; padding-top: 1px; min-width: 0; border-left: 2px solid #c2c6cb; }
  .filter { display: flex; height: 29px; margin: 0 5px 0 1px; border: 1px solid #bdbdbd; background: #fff; }
  .filter input { flex: 1; min-width: 0; padding: 0 4px; }
  .filter input::placeholder { color: #999; opacity: 1; }
  .filter button { width: 23px; background: #efefef; border-left: 1px solid #bdbdbd; }
  .gridbox { flex: 1; margin: 4px 4px 0 0; border: 1px solid #cbcbcb; border-left: 0; background: #fff; }
  thead th { height: 30px; background: #f5f5f5; border-bottom: 1px solid #cbcbcb; }
  .tree { height: 378px; }
  .tree th { padding: 0 5px; }
  .tree th + th { border-left: 1px solid #cbcbcb; }
  .tree .c1 { width: 810px; }
  .node { display: flex; align-items: center; }
  .tree .exp { width: 53px; padding-left: 16px; }
  .tree .lbl { margin-left: 17px; }
  .tree .child .exp { width: 94px; }
  .tree .child .lbl { flex: 1; margin-left: 13px; padding-left: 4px; line-height: 23px; }
  .pkg { padding-left: 5px; }
  .sel .lbl, .sel .pkg { background: #cce4f7; outline: 1px dotted #55708a; outline-offset: -1px; }
  .bottomtabs { display: flex; height: 42px; padding-top: 7px; }
  .bottomtabs button { height: 33px; padding: 0 15px; border: 1px solid #c4c4c4; border-left: 0; }
  .bottomtabs .on { height: 35px; border: 0; border-right: 1px solid #c4c4c4; }
  .bottomtabs::after { content: ""; flex: 1; border-top: 1px solid #c4c4c4; }
  .side { display: flex; flex-direction: column; gap: 6px; width: 430px; }
  .refobj { flex: 0 0 402px; padding: 0 3px 3px; display: flex; flex-direction: column; }
  .lower { flex: 1; }
  .ptitle { display: flex; align-items: center; justify-content: space-between; height: 51px; padding: 0 10px 0 12px; color: #3c3c3c; }
  .acts { display: flex; gap: 8px; color: #666; }
  .refgrid { flex: 1; border: 1px solid #cbcbcb; background: #fff; }
  .refgrid th { padding: 0 6px; }
  .refgrid th + th { border-left: 1px solid #cbcbcb; }
  .refgrid td { height: 25px; padding-left: 5px; overflow: hidden; }
  .r1 { width: 151px; }
  .r2 { width: 135px; }
  .refnode { display: flex; align-items: center; }
  .refnode .exp { width: 47px; padding-left: 11px; }
  .refnode .ri { width: 34px; }

  .messages { display: flex; flex-direction: column; height: 338px; margin: 0 0 0 2px; }
  .messages h2 { padding: 13px 0 11px 16px; }
  .msgbody { flex: 1; display: flex; }
  .msgtools { display: flex; flex-direction: column; align-items: center; gap: 9px; width: 42px; }
  .msgtools button { height: 16px; }
  .msgtools button:first-of-type { margin-top: -5px; }
  .msgtools hr { width: 28px; margin: -2px 0 3px; border: 0; border-top: 1px solid #c4c4c4; }
  .msggrid { flex: 1; margin-right: 3px; border: 1px solid #c4c4c4; background: #fff; }
  .msggrid th { padding: 0 5px; }
  .msggrid .mid { width: 677px; border-right: 1px solid #cbcbcb; }
  .msgtabs { display: flex; height: 41px; padding: 3px 0 5px 5px; }
  .msgtabs button { gap: 3px; padding: 0 15px; border-right: 1px solid #d0d0d0; }
  .msgtabs .on { color: #1a478a; }

  .props { width: 485px; display: flex; flex-direction: column; }
  .props .ptitle { height: 56px; padding-left: 16px; padding-right: 14px; }
  .ptools { display: flex; align-items: center; height: 29px; padding: 0 8px 0 5px; }
  .ptools > button { width: 29px; height: 29px; }
  .ptools .lit { background: #add6f1; }
  .ptools > i { width: 1px; height: 22px; margin: 0 4px; background: #c9c9c9; }
  .ptools .filter { flex: 1; margin: 0 0 0 5px; }
  .pgrid { flex: 1; margin: 3px 2px 3px 3px; border: 2px solid #c8c8c8; background: #f5f5f5; }
  .cat { display: flex; justify-content: space-between; align-items: center; height: 24px; padding: 0 8px 0 20px; background: #dcdcdc; color: #1a478a; font-size: 15px; font-weight: 700; }
  .ptable { color: #111; }
  .general { height: 51px; }
  .ports { height: 772px; }
  .ptable .strip { width: 17px; background: #dcdcdc; }
  .ptable th { width: 220px; font-size: 15px; line-height: 20px; background: #f0f0f0; border-bottom: 1px solid #d6d6d6; border-right: 1px solid #d6d6d6; }
  .ptable .val { padding-left: 4px; line-height: 20px; background: #fff; border-bottom: 1px solid #d6d6d6; }
  .ptable .grey { color: #505050; }
  .cell { display: flex; align-items: center; gap: 2px; }
  .gap12 { width: 12px; }
  .void { height: 106px; background: #a0a0a0; }

  .status { height: 31px; padding-left: 9px; line-height: 37px; background: #1a478a; color: #fff; }

  .menu { position: absolute; left: 296px; top: 343px; width: 502px; padding: 0 1px 3px; border: 1px solid #a8a8a8; background: #fff; font: 17px/24px "Noto Sans", sans-serif; color: #3c3c3c; }
  .menu button { display: flex; justify-content: flex-start; width: 100%; height: 31px; padding: 0 14px 0 10px; }
  .menu button.plain { height: 32px; }
  .menu button.sel { background: #cce4f7; border: 1px solid #86b4e0; padding-left: 9px; }
  .menu button:disabled { color: #9c9c9c; }
  .menu hr { height: 2px; margin: 1px 7px 2px 42px; border: 0; background: #e2e2e2; }
  .mi { width: 36px; }
  .mt { flex: 1; text-align: left; }

  .inlay { position: absolute; left: 797px; top: 424px; width: 1144px; height: 832px; overflow: hidden; color: #111; }
  .under { display: flex; flex-direction: column; height: 100%; background: #fff; }
  .u1 { height: 25px; }
  .u2 { height: 25px; background: #e5f1fb; }
  .u3 { flex: 1; }
  .u4 { height: 82px; background: #f5f5f5; border-bottom: 1px solid #c4c4c4; }
  .u5 { height: 6px; background: #ececec; border-bottom: 1px solid #c4c4c4; }
  .u6 { height: 38px; background: #f5f5f5; border-bottom: 2px solid #c9ced6; }
  .u7 { height: 54px; border-top: 1px solid #c4c4c4; border-bottom: 2px solid #cbcbcb; background: #f5f5f5; margin-top: 4px; }
  .dialog { position: absolute; display: flex; flex-direction: column; border: 1px solid #a8a8a8; border-radius: 10px; background: #f0f0f0; }
  .dtitle { display: flex; justify-content: space-between; align-items: center; height: 42px; padding: 0 15px 0 9px; background: #f3f3f3; border-radius: 10px 10px 0 0; font: 16px/24px var(--seg); }
  .withicon { display: flex; align-items: center; gap: 7px; }
  .grip { position: absolute; right: 0; bottom: 0; }
  .dlg1 { left: -1px; top: 0; width: 853px; height: 828px; padding-bottom: 10px; font: 18px/24px var(--seg); box-shadow: 0 6px 24px rgb(0 0 0 / .35); }
  .dlg1 .dtitle { color: #8f8f8f; }
  .dtabs { display: flex; align-items: flex-end; height: 38px; padding: 0 8px; }
  .dtabs button { height: 28px; padding: 0 5px; border: 1px solid #e4e4e4; border-bottom: 0; border-left: 0; background: #f2f2f2; font-family: "Noto Sans", sans-serif; font-size: 17px; }
  .dtabs .on { height: 31px; padding: 0 11px; background: #f9f9f9; }
  .dtabs .on ~ button { padding: 0 7px; }
  .page { flex: 1; display: flex; flex-direction: column; margin: 0 10px 0 7px; padding: 21px 18px 22px 20px; border: 1px solid #e6e6e6; background: #f9f9f9; }
  .listbox { flex: 1; border: 1px solid #8a8f98; background: #fff; }
  .listbox th { height: 31px; background: #fff; border-bottom: 0; font-family: "Noto Sans", sans-serif; font-size: 17px; border-right: 1px solid #e2e2e2; }
  .listbox .m1 { width: 173px; padding-left: 7px; }
  .listbox .m2 { width: 247px; text-align: center; }
  .listbox th:last-child { border: 0; }
  .btns { display: flex; justify-content: flex-end; gap: 17px; padding-top: 4px; }
  .btns button { width: 130px; height: 38px; border: 1px solid #d4d4d4; border-bottom-color: #c0c0c0; border-radius: 4px; background: #fdfdfd; font-size: 17px; }
  .btns button:disabled, .dfoot button:disabled { color: #8f8f8f; background: #f7f7f7; border-color: #ececec; }
  .foot { gap: 11px; padding: 10px 8px 0 0; }
  .dlg2 { left: 418px; top: 164px; width: 725px; height: 509px; font: 15px/22px var(--ui); box-shadow: 0 20px 50px rgb(0 0 0 / .5); }
  .dlg2 .dtitle { color: #222; padding-left: 11px; padding-right: 16px; }
  fieldset { display: flex; align-items: flex-start; height: 91px; margin: 12px 10px 0 12px; padding: 15px 13px 0 7px; border: 1px solid #dcdcdc; }
  legend { padding: 0 2px; margin-left: -1px; }
  .dlg2 button { height: 30px; }
  fieldset button, .dfoot button { width: 106px; border: 1px solid #d4d4d4; border-bottom-color: #c0c0c0; border-radius: 4px; background: #fdfdfd; }
  fieldset .wide { width: 119px; margin: 0 12px 0 10px; }
  fieldset input { flex: 1; height: 27px; background: #fff; border-bottom: 1px solid #868686; }
  .objbox { flex: 1; margin: 15px 13px 13px 15px; border: 1px solid #868c96; background: #fff; }
  .objbox th { height: 26px; padding-left: 10px; background: #fff; border-bottom: 0; }
  .objbox .o1 { width: 347px; border-right: 1px solid #e2e2e2; }
  .objbox em { margin-right: 14px; font-size: 11px; font-style: normal; }
  .objbox td { height: 22px; padding-left: 6px; color: #000; }
  .objbox .none { padding-left: 41px; }
  .objbox .obj { padding-left: 23px; }
  .objbox .node { gap: 2px; }
  .dfoot { display: flex; gap: 16px; padding: 0 14px 19px 17px; }
  .dfoot .first { width: 134px; margin-right: auto; }

  .arrows { position: absolute; left: 0; top: 0; width: 100%; height: 100%; pointer-events: none; }
  .frame { position: absolute; border: 3px solid #029a9a; }
  .frame.red { border-color: #ff3030; }
  .f1 { left: 95px; top: 325px; width: 159px; height: 31px; }
  .f2 { left: 294px; top: 940px; width: 183px; height: 38px; }
  .f3 { left: 898px; top: 469px; width: 136px; height: 36px; }
  .f4 { left: 1192px; top: 1131px; width: 145px; height: 41px; }
  .f5 { left: 1245px; top: 795px; width: 624px; height: 24px; }
  .note { position: absolute; display: flex; align-items: center; gap: 14px; color: #fff; font: 24px/50px "Noto Sans", "Noto Sans CJK SC", sans-serif; }
  .note b { width: 30px; height: 30px; border-radius: 50%; background: #029a9a; text-align: center; font-size: 20px; font-weight: 400; line-height: 29px; }
  .note b.red { background: #ff3838; }
  .note p { position: relative; margin: 0; height: 50px; padding: 0 18px 0 9px; border-radius: 4px; background: rgb(0 0 0 / .6); line-height: 48px; }
  .note p::before { content: ""; position: absolute; left: -8px; top: 17px; border: 8px solid transparent; border-left: 0; border-right-color: rgb(0 0 0 / .6); }
  .n1 { left: 260px; top: 311px; }
  .n1 p { padding-right: 22px; }
  .n2 { left: 489px; top: 946px; }
  .n3 { left: 1022px; top: 415px; }
  .n4 { left: 1557px; top: 817px; }
  .n4 p { height: 48px; font-size: 23px; }
</style>
